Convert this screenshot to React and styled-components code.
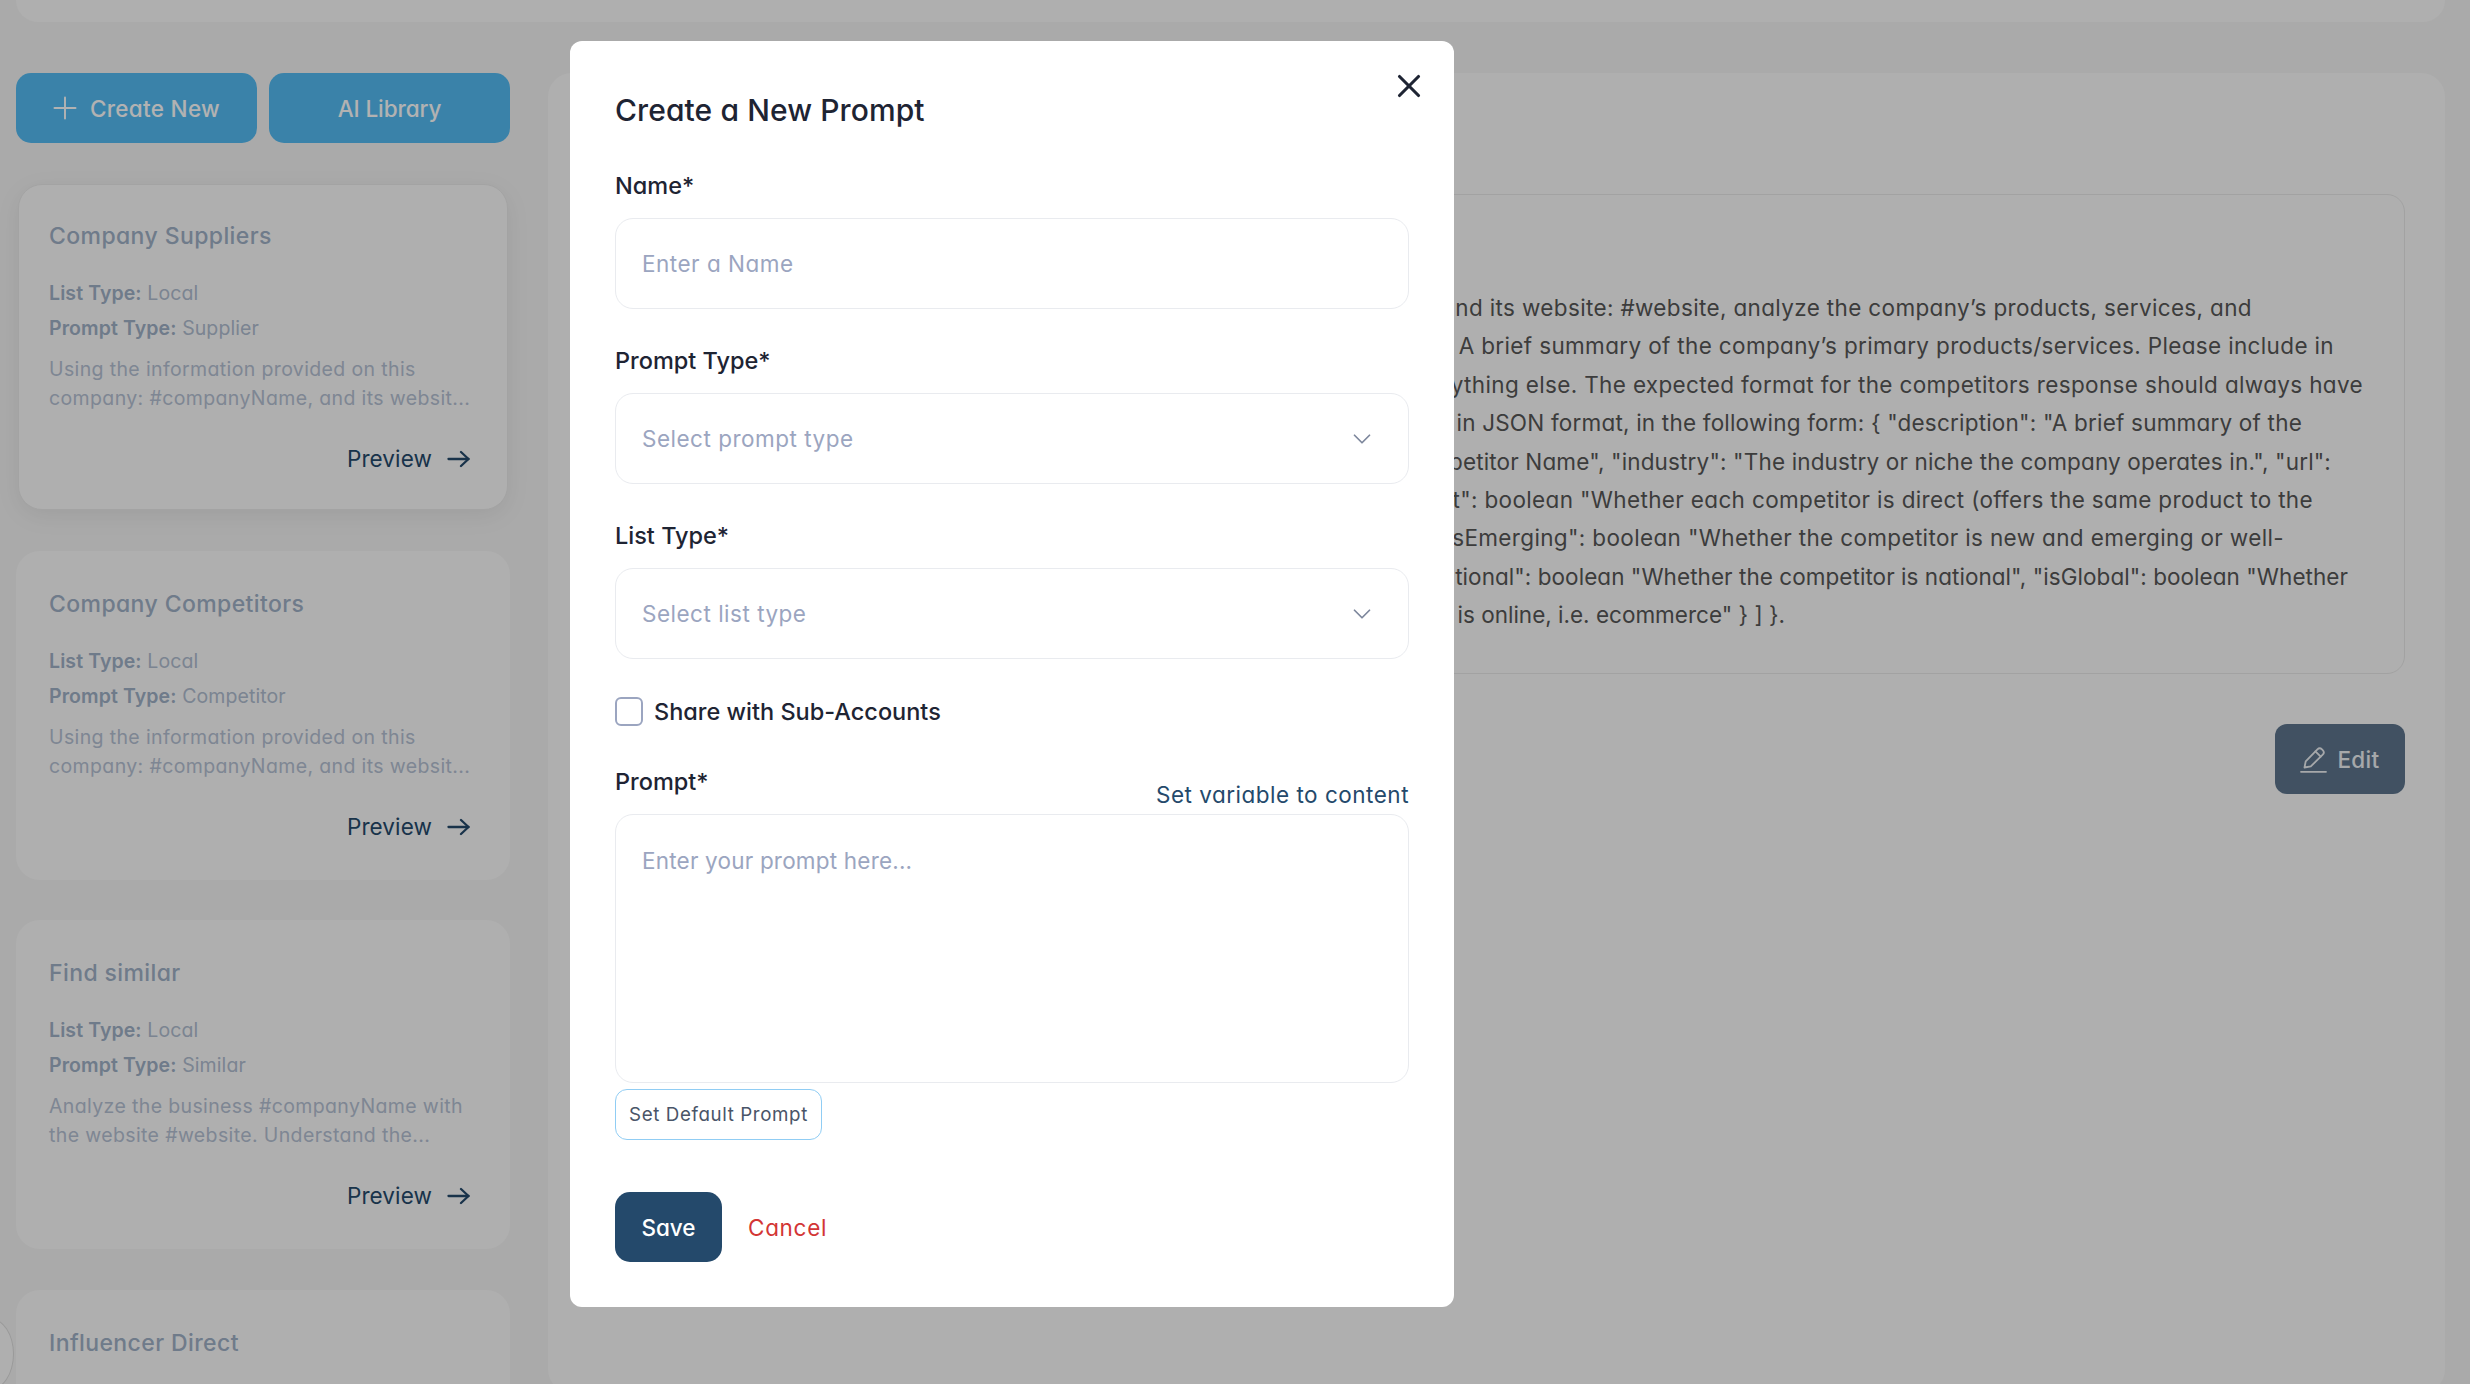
import React from 'react';
import styled, { createGlobalStyle } from 'styled-components';
import { Plus, X, ChevronDown } from 'lucide-react';

const GlobalStyle = createGlobalStyle`
  * { box-sizing: border-box; }
  html, body { margin: 0; height: 100%; overflow: hidden; }
  body {
    background: #f4f4f4;
    font-family: Inter, "Open Sans", sans-serif;
    font-feature-settings: "cv11";
  }
  input, textarea, button { font-family: inherit; font-feature-settings: inherit; }
`;

const cards = [
  { title: 'Company Suppliers', type: 'Supplier', active: true, text: ['Using the information provided on this', 'company: #companyName, and its websit...'] },
  { title: 'Company Competitors', type: 'Competitor', text: ['Using the information provided on this', 'company: #companyName, and its websit...'] },
  { title: 'Find similar', type: 'Similar', text: ['Analyze the business #companyName with', 'the website #website. Understand the...'] },
  { title: 'Influencer Direct', type: 'Influencer', text: ['Using the information provided on this', 'company: #companyName, and its websit...'] },
];

// inset is how far each line stops short of the box edge, track its letter spacing
const promptLines = [
  { inset: 152, track: 0.35, text: 'Using the information provided on this company: #companyName and its website: #website, analyze the company’s products, services, and' },
  { inset: 70, track: 0.35, text: 'target market. Return a description: A brief summary of the company’s primary products/services. Please include in' },
  { inset: 41, track: 0.35, text: 'the response only the JSON and not anything else. The expected format for the competitors response should always have' },
  { inset: 102, track: 0.2, text: 'the key "competitors", in JSON format, in the following form: { "description": "A brief summary of the' },
  { inset: 73, track: 0.15, text: 'company", "competitors": [ { "name": "Competitor Name", "industry": "The industry or niche the company operates in.", "url":' },
  { inset: 91, track: 0.35, text: '"The URL", "isDirect": boolean "Whether each competitor is direct (offers the same product to the' },
  { inset: 120, track: 0.35, text: 'same market)", "isEmerging": boolean "Whether the competitor is new and emerging or well-' },
  { inset: 56, track: 0.05, text: 'established", "isNational": boolean "Whether the competitor is national", "isGlobal": boolean "Whether' },
  { inset: 619, track: 0, text: 'the competitor is global", "isOnline": boolean "Whether the competitor is online, i.e. ecommerce" } ] }.' },
];

const ArrowIcon = () => (
  <svg width="23" height="18" viewBox="0 0 23 18" fill="none" stroke="currentColor" strokeWidth="2.3" strokeLinecap="round" strokeLinejoin="round">
    <path d="M1.5 9h20" />
    <path d="M14 2l7.5 7-7.5 7" />
  </svg>
);

const PencilIcon = () => (
  <svg width="27" height="27" viewBox="0 0 27 27" fill="none" stroke="currentColor" strokeWidth="1.8" strokeLinecap="round" strokeLinejoin="round">
    <path d="M4.5 21.5l1.2-6.2L17.4 3.4c1.3-1.3 3.3-1.3 4.6 0l.7.7c1.3 1.3 1.3 3.3 0 4.6L10.8 20.4z" />
    <path d="M15.4 5.4l5.3 5.3" />
    <path d="M1 25.8h25" />
  </svg>
);

const App = () => {
  return (
    <>
      <GlobalStyle />
      <Page>
        <TopBar />
        <Columns>
          <Sidebar>
            <SidebarActions>
              <ActionButton $withIcon><Plus size={36} strokeWidth={1.3} />Create New</ActionButton>
              <ActionButton>AI Library</ActionButton>
            </SidebarActions>
            <CardList>
              {cards.map((card) => (
                <Card key={card.title} $active={card.active}>
                  <CardTitle>{card.title}</CardTitle>
                  <CardMeta><b>List Type:</b> Local</CardMeta>
                  <CardMeta><b>Prompt Type:</b> {card.type}</CardMeta>
                  <CardText>
                    {card.text.map((line) => <div key={line}>{line}</div>)}
                  </CardText>
                  <PreviewLink>Preview<ArrowIcon /></PreviewLink>
                </Card>
              ))}
            </CardList>
          </Sidebar>
          <MainPanel>
            <PromptBox>
              {promptLines.map((line) => (
                <PromptLine key={line.inset} $inset={line.inset} $track={line.track}>{line.text}</PromptLine>
              ))}
            </PromptBox>
            <EditRow>
              <EditButton><PencilIcon />Edit</EditButton>
            </EditRow>
          </MainPanel>
        </Columns>
        <CollapseHandle />
      </Page>
      <Overlay />
      <Modal>
        <CloseButton aria-label="Close"><X size={38} strokeWidth={2} /></CloseButton>
        <ModalTitle>Create a New Prompt</ModalTitle>
        <Field>
          <Label>Name*</Label>
          <TextInput placeholder="Enter a Name" />
        </Field>
        <Field>
          <Label>Prompt Type*</Label>
          <SelectBox>Select prompt type<ChevronDown size={30} strokeWidth={1.4} /></SelectBox>
        </Field>
        <Field>
          <Label>List Type*</Label>
          <SelectBox>Select list type<ChevronDown size={30} strokeWidth={1.4} /></SelectBox>
        </Field>
        <CheckRow>
          <CheckBox type="checkbox" />
          Share with Sub-Accounts
        </CheckRow>
        <PromptHeader>
          <Label>Prompt*</Label>
          <VariableLink>Set variable to content</VariableLink>
        </PromptHeader>
        <PromptArea placeholder="Enter your prompt here..." />
        <DefaultButton>Set Default Prompt</DefaultButton>
        <ModalActions>
          <SaveButton>Save</SaveButton>
          <CancelButton>Cancel</CancelButton>
        </ModalActions>
      </Modal>
    </>
  );
};

export default App;

const Page = styled.div`
  position: relative;
  height: 1384px;
  padding: 0 25px 0 16px;
  overflow: hidden;
`;

const TopBar = styled.div`
  height: 22px;
  background: #fbfbfb;
  border-radius: 0 0 24px 24px;
`;

const Columns = styled.div`
  display: flex;
  gap: 38px;
  margin-top: 51px;
`;

const Sidebar = styled.div`
  flex: 0 0 494px;
`;

const SidebarActions = styled.div`
  display: grid;
  grid-template-columns: 1fr 1fr;
  gap: 12px;
`;

const ActionButton = styled.button`
  height: 70px;
  display: flex;
  align-items: center;
  justify-content: center;
  gap: 7px;
  padding: 0 ${(props) => (props.$withIcon ? '6px' : '0')} 0 0;
  border: none;
  border-radius: 15px;
  background: #54bbf3;
  color: #fff;
  font-size: 22.5px;
  font-weight: 500;
  letter-spacing: ${(props) => (props.$withIcon ? '0.3px' : '-0.1px')};
`;

const CardList = styled.div`
  display: flex;
  flex-direction: column;
  gap: 40.5px;
  margin-top: 41px;
`;

const Card = styled.div`
  height: ${(props) => (props.$active ? '326px' : '329px')};
  margin: ${(props) => (props.$active ? '0 2px' : '0')};
  padding: ${(props) => (props.$active ? '36px 30px 0 30px' : '38px 33px 0')};
  background: #fbfbfb;
  border-radius: 24px;
  border: ${(props) => (props.$active ? '1.5px solid #eaeaea' : 'none')};
  box-shadow: ${(props) => (props.$active ? '0 6px 24px rgba(0, 0, 0, 0.07)' : 'none')};
`;

const CardTitle = styled.div`
  height: 30px;
  margin-bottom: 25px;
  color: #9fb0c6;
  font-size: 23px;
  font-weight: 500;
  letter-spacing: 0.4px;
  line-height: 30px;
`;

const CardMeta = styled.div`
  height: 35px;
  color: #b0bdd0;
  font-size: 19.5px;
  letter-spacing: 0.1px;
  line-height: 35px;

  b {
    color: #9fb0c6;
    font-weight: 600;
  }
`;

const CardText = styled.div`
  margin-top: 9px;
  color: #b5c1d3;
  font-size: 19.5px;
  letter-spacing: 0.37px;
  line-height: 29px;
  white-space: nowrap;
`;

const PreviewLink = styled.div`
  display: flex;
  align-items: center;
  justify-content: flex-end;
  gap: 15px;
  margin-top: 29px;
  padding-right: 7px;
  color: #24496b;
  font-size: 22.5px;
  letter-spacing: 0.1px;
  line-height: 34px;
`;

const MainPanel = styled.div`
  flex: 1;
  height: 1320px;
  padding: 121px 40px 0 64px;
  background: #fbfbfb;
  border-radius: 24px;
`;

const PromptBox = styled.div`
  height: 480px;
  padding-top: 94px;
  border: 1px solid #e8e8e8;
  border-radius: 18px;
`;

const PromptLine = styled.div`
  height: 38.4px;
  padding-right: ${(props) => props.$inset}px;
  color: #575757;
  font-size: 22.5px;
  letter-spacing: ${(props) => props.$track}px;
  line-height: 38.4px;
  text-align: right;
  white-space: nowrap;
  overflow: hidden;
`;

const EditRow = styled.div`
  display: flex;
  justify-content: flex-end;
  margin-top: 50px;
`;

const EditButton = styled.button`
  width: 130px;
  height: 70px;
  display: flex;
  align-items: center;
  justify-content: center;
  gap: 10px;
  border: none;
  border-radius: 12px;
  background: #5d758d;
  color: #eef1f4;
  font-size: 22.5px;
  font-weight: 500;
  letter-spacing: 0.3px;
`;

const CollapseHandle = styled.div`
  position: absolute;
  left: -34px;
  top: 1318px;
  width: 48px;
  height: 72px;
  border-radius: 50%;
  background: #fbfbfb;
  border: 1px solid #dcdcdc;
`;

const Overlay = styled.div`
  position: fixed;
  inset: 0;
  background: rgba(0, 0, 0, 0.3);
`;

const Modal = styled.div`
  position: fixed;
  left: 570px;
  top: 41px;
  width: 884px;
  height: 1266px;
  padding: 0 45px;
  background: #fff;
  border-radius: 12px;
  color: #1e2433;
`;

const CloseButton = styled.button`
  position: absolute;
  top: 26px;
  right: 26px;
  display: flex;
  padding: 0;
  border: none;
  background: none;
  color: #1e2433;
`;

const ModalTitle = styled.h2`
  height: 46px;
  margin: 46px 0 36px;
  font-size: 30px;
  font-weight: 500;
  letter-spacing: 0.1px;
  line-height: 46px;
`;

const Field = styled.div`
  margin-bottom: 35px;
`;

const Label = styled.div`
  height: 34px;
  margin-bottom: 15px;
  font-size: 23.5px;
  font-weight: 500;
  line-height: 34px;
`;

const TextInput = styled.input`
  display: block;
  width: 100%;
  height: 91px;
  padding: 0 26px;
  border: 1.5px solid #e9ebef;
  border-radius: 18px;
  font-size: 22.5px;
  letter-spacing: 0.5px;
  outline: none;

  &::placeholder {
    color: #9ba5c0;
    opacity: 1;
  }
`;

const SelectBox = styled.div`
  display: flex;
  align-items: center;
  justify-content: space-between;
  height: 91px;
  padding: 0 31px 0 26px;
  border: 1.5px solid #e9ebef;
  border-radius: 18px;
  color: #9ba5c0;
  font-size: 22.5px;
  letter-spacing: 0.5px;

  svg {
    color: #7d879c;
  }
`;

const CheckRow = styled.label`
  display: flex;
  align-items: center;
  gap: 11px;
  height: 30px;
  margin-top: 37px;
  font-size: 23.5px;
  font-weight: 500;
`;

const CheckBox = styled.input`
  appearance: none;
  width: 28px;
  height: 29px;
  margin: 0;
  border: 2px solid #9ba5c0;
  border-radius: 6px;
`;

const PromptHeader = styled.div`
  display: flex;
  justify-content: space-between;
  height: 88px;
  padding-top: 39px;
`;

const VariableLink = styled.div`
  margin-top: 13px;
  color: #24496b;
  font-size: 22.5px;
  letter-spacing: 0.5px;
  line-height: 34px;
`;

const PromptArea = styled.textarea`
  display: block;
  width: 100%;
  height: 269px;
  padding: 29px 26px;
  resize: none;
  border: 1.5px solid #e9ebef;
  border-radius: 18px;
  font-size: 22.5px;
  letter-spacing: 0.2px;
  line-height: 34px;
  outline: none;

  &::placeholder {
    color: #9ba5c0;
    opacity: 1;
  }
`;

const DefaultButton = styled.button`
  display: block;
  width: 207px;
  height: 51px;
  margin-top: 6px;
  padding: 0;
  border: 1.5px solid #90cdf4;
  border-radius: 12px;
  background: #fff;
  color: #4a5568;
  font-size: 18.75px;
  letter-spacing: 0.6px;
`;

const ModalActions = styled.div`
  display: flex;
  align-items: center;
  gap: 26px;
  margin-top: 52px;
`;

const SaveButton = styled.button`
  width: 107px;
  height: 70px;
  border: none;
  border-radius: 15px;
  background: #24496b;
  color: #fff;
  font-size: 22.5px;
  font-weight: 500;
`;

const CancelButton = styled.button`
  padding: 0;
  border: none;
  background: none;
  color: #d33535;
  font-size: 22.5px;
  letter-spacing: 0.7px;
`;
